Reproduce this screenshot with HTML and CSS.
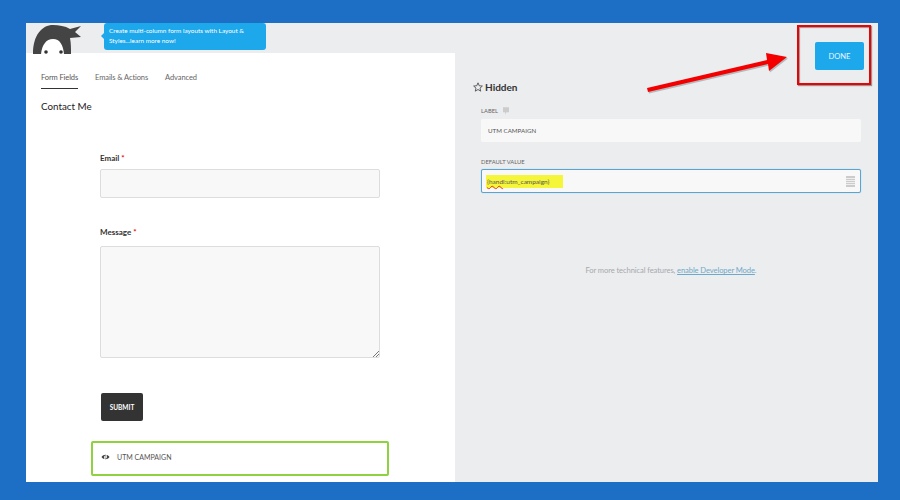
FILE: index.html
```html
<!DOCTYPE html>
<html lang="en">
<head>
<meta charset="utf-8">
<title>Form builder</title>
<link rel="stylesheet" href="styles.css">
</head>
<body>
<div class="app">
  <header class="topbar">
    <svg class="logo" width="60" height="31" viewBox="0 0 60 31" aria-hidden="true">
      <path d="M0 31C0 12 9 2 20 2c6 0 12 1 17 4L48 3l-6 6 6 5-11 1c1 5 1 10 1 16Z" fill="#444"/>
      <path d="M8 31C9 22 13 16 20 16S30 22 31 31Z" fill="#fff"/>
      <circle cx="13" cy="29" r="1.800" fill="#333"/>
      <circle cx="28" cy="29" r="1.800" fill="#333"/>
    </svg>
    <div class="bubble">Create multi-column form layouts with Layout &amp; Styles...learn more now!</div>
    <div class="spacer"></div>
    <button class="done">DONE</button>
  </header>
  <main class="panels">
    <section class="left">
      <nav class="tabs">
        <span class="tab active">Form Fields</span>
        <span class="tab">Emails &amp; Actions</span>
        <span class="tab">Advanced</span>
      </nav>
      <h2 class="form-title">Contact Me</h2>
      <div class="form">
        <label class="field-label label-email">Email <em>*</em></label>
        <div class="input"></div>
        <label class="field-label label-message">Message <em>*</em></label>
        <div class="textarea">
          <svg class="grip" width="7" height="7" viewBox="0 0 7 7" aria-hidden="true"><path d="M1 7 7 1M4 7l3-3" stroke="#777" fill="none"/></svg>
        </div>
        <button class="submit">SUBMIT</button>
      </div>
      <div class="hidden-row">
        <svg class="eye" width="9" height="8" viewBox="0 0 18 16" aria-hidden="true"><path d="M1 8c4-6 12-6 16 0-4 6-12 6-16 0Z" fill="#444"/><circle cx="9" cy="8" r="3" fill="#fff"/><circle cx="9" cy="8" r="1.500" fill="#444"/><path d="M13 1 5 15" stroke="#fff" stroke-width="1.500"/></svg>
        <span>UTM CAMPAIGN</span>
      </div>
    </section>
    <section class="right">
      <h3 class="settings-title">
        <svg width="10" height="10" viewBox="0 0 24 24" aria-hidden="true"><path d="m12 2 3 7 7.500.7-5.700 5 1.700 7.300L12 18l-6.500 4 1.700-7.300-5.700-5L9 9Z" fill="none" stroke="#444" stroke-width="2"/></svg>
        Hidden
      </h3>
      <div class="setting-label">LABEL
        <svg width="6" height="8" viewBox="0 0 7 9" aria-hidden="true"><path d="M0 0h7v6H4L2.500 9V6H0Z" fill="#ccc"/></svg>
      </div>
      <div class="setting-input">UTM CAMPAIGN</div>
      <div class="setting-label second">DEFAULT VALUE</div>
      <div class="setting-input focus">
        <span class="marked"><span class="squiggle">{hand</span>l:utm_campaign}</span>
        <svg class="merge" width="9" height="11" viewBox="0 0 9 11" aria-hidden="true"><path d="M0 0h9v11H0Z" fill="#ccc"/><path d="M0 2.500h9M0 4.500h9M0 6.500h9M0 8.500h9" stroke="#eee"/></svg>
      </div>
      <p class="dev-note">For more technical features, <a href="#">enable Developer Mode</a>.</p>
    </section>
  </main>
  <div class="callout-box"></div>
  <svg class="arrow" width="150" height="50" viewBox="0 0 150 50" aria-hidden="true">
    <path d="M1 40 121 12l-1-7 21 4-18 14-1-7L2 44Z" fill="#8a9a9a" opacity=".6" transform="translate(1 1.500)"/>
    <path d="M1 40 121 12l-1-7 21 4-18 14-1-7L2 44Z" fill="#f40000"/>
  </svg>
</div>
</body>
</html>
```

FILE: styles.css
```css
* { box-sizing: border-box; }
html, body { margin: 0; height: 100%; }
body {
  width: 900px;
  height: 500px;
  overflow: hidden;
  background: #1c6fc4;
  padding: 23px 22px 18px 26px;
  font-family: "Lato", "Liberation Sans", sans-serif;
  color: #444;
}
.app {
  position: relative;
  height: 459px;
  background: #ecedef;
  overflow: hidden;
  display: flex;
  flex-direction: column;
}
.topbar {
  height: 30px;
  display: flex;
  align-items: flex-start;
  position: relative;
  z-index: 1;
}
.logo { margin: 0 0 0 7px; flex: none; height: 31px; }
.bubble {
  position: relative;
  width: 162px;
  height: 27px;
  margin: 0 0 0 11px;
  padding: 3px 20px 3px 5px;
  background: #1ea8ec;
  color: #fff;
  border-radius: 3px;
  font-size: 6.400px;
  line-height: 10px;
}
.bubble::before {
  content: "";
  position: absolute;
  left: -3px;
  top: 10px;
  border-style: solid;
  border-width: 3px 3px 3px 0;
  border-color: transparent #1ea8ec transparent transparent;
}
.spacer { flex: 1; }
.done {
  width: 49px;
  height: 28px;
  margin: 19px 14px 0 0;
  padding: 0;
  border: 0;
  border-radius: 2px;
  background: #1ea8ec;
  color: #e8f6fe;
  font: 7.600px "Lato", sans-serif;
}
.panels { flex: 1; display: flex; min-height: 0; }
.left {
  width: 429px;
  background: #fff;
  padding: 19px 0 0 15px;
  position: relative;
}
.tabs { display: flex; gap: 17px; font-size: 7.500px; letter-spacing: -.1px; line-height: 12px; color: #666; }
.tab { padding-bottom: 4px; }
.tab.active { color: #555; border-bottom: 1px solid #333; }
.form-title {
  margin: 9px 0 0;
  font-size: 9.800px;
  font-weight: 400;
  line-height: 16px;
  color: #222;
}
.form { margin: 0 0 0 59px; width: 280px; }
.field-label { display: block; font-size: 8px; font-weight: 700; line-height: 12px; color: #333; }
.field-label em { color: #e00; font-style: normal; }
.label-email { padding: 38px 0 0 0; margin-bottom: 5px; }
.label-message { margin-top: 28px; margin-bottom: 8px; }
.input, .textarea {
  background: #f8f8f8;
  border: 1px solid #ddd;
  border-radius: 2px;
}
.input { height: 29px; }
.textarea { height: 112px; position: relative; }
.grip { position: absolute; right: 0; bottom: 0; }
.submit {
  display: block;
  width: 42px;
  height: 28px;
  margin: 35px 0 0 1px;
  padding: 0;
  border: 0;
  border-radius: 2px;
  background: #333;
  color: #fff;
  font: 700 6.500px "Lato", sans-serif;
}
.hidden-row {
  display: flex;
  align-items: center;
  gap: 7px;
  width: 298px;
  height: 35px;
  margin: 20px 0 0 50px;
  padding: 0 0 4px 8px;
  border: 2px solid #8fd13f;
  border-radius: 2px;
  background: #fff;
  font-size: 7px;
  color: #555;
}
.right { flex: 1; padding: 26px 17px 0 18px; }
.settings-title {
  display: flex;
  align-items: center;
  gap: 2px;
  margin: 0 0 11px;
  font-size: 10px;
  font-weight: 700;
  line-height: 16px;
  color: #333;
}
.setting-label {
  display: flex;
  align-items: center;
  gap: 5px;
  margin: 0 0 4px 8px;
  font-size: 5.800px;
  line-height: 9px;
  color: #666;
}
.setting-label.second { margin-top: 15px; margin-bottom: 3px; }
.setting-input {
  position: relative;
  display: flex;
  align-items: center;
  height: 23px;
  margin-left: 8px;
  padding-left: 7px;
  background: #f8f8f8;
  border-radius: 2px;
  font-size: 6.200px;
  color: #555;
}
.setting-input.focus {
  height: 24px;
  padding-left: 4px;
  border: 1px solid #5aa5cf;
  box-shadow: 0 0 1px #7fbbdc;
  font-size: 6.500px;
}
.marked { background: #f5f53a; padding: 3px 14px 3px 1px; color: #555; }
.squiggle { text-decoration: underline wavy #d33 .5px; }
.merge { position: absolute; right: 5px; top: 6px; }
.dev-note {
  margin: 71px 0 0;
  text-align: center;
  font-size: 7.600px;
  letter-spacing: -.1px;
  line-height: 12px;
  color: #a6a9ad;
  padding-left: 8px;
}
.dev-note a { color: #6fa9c9; }
.callout-box {
  position: absolute;
  left: 771px;
  top: 2px;
  width: 74px;
  height: 60px;
  border: 2.500px solid #f00000;
  box-shadow: 1px 1px 1px #8a9a9a, inset 1px 1px 1px #8a9a9a;
  z-index: 2;
}
.arrow { position: absolute; left: 620px; top: 25px; z-index: 2; }
```
